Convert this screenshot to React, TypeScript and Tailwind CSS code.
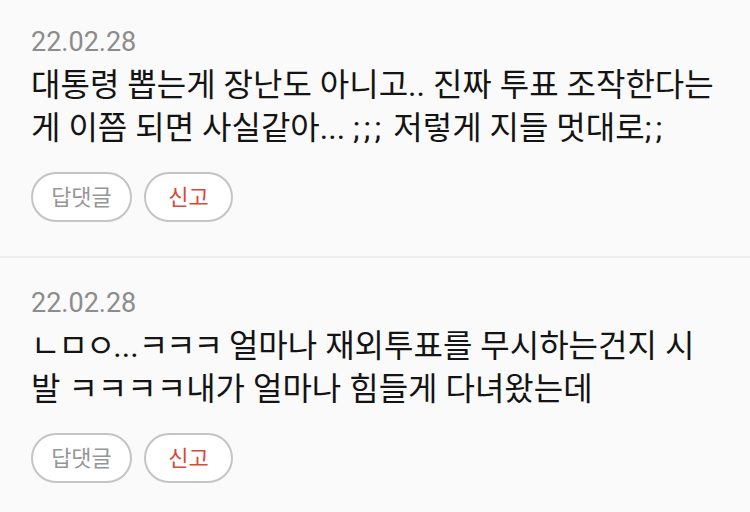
import React from "react";

// A run of text with optional extra letter spacing
type Run = { t: string; cls?: string };

type Comment = {
  date: string;
  lines: Run[][];
};

const tight = "tracking-[-2px]";
const loose = "tracking-[4px]";

const comments: Comment[] = [
  {
    date: "22.02.28",
    lines: [
      [{ t: "대통령 뽑는게 장난도 아니고.. 진짜 투표 조작한다는" }],
      [
        { t: "게 이쯤 되면 사실같아... " },
        { t: ";;;", cls: loose },
        { t: " 저렇게 지들 멋대로" },
        { t: ";;", cls: loose },
      ],
    ],
  },
  {
    date: "22.02.28",
    lines: [
      [
        { t: "ㄴㅁㅇ", cls: tight },
        { t: "..." },
        { t: "ㅋㅋㅋ", cls: tight },
        { t: " 얼마나 재외투표를 무시하는건지 시" },
      ],
      [{ t: "발 ㅋㅋㅋㅋ내가 얼마나 힘들게 다녀왔는데" }],
    ],
  },
];

// Latin glyphs from Roboto, Hangul falls through to Noto Sans CJK KR
const bodyFont = {
  fontFamily: 'Roboto, "Noto Sans CJK KR", sans-serif',
};

function CommentItem({ c }: { c: Comment }) {
  return (
    <div className="border-b-2 border-[#eeeeee] pl-[31px] pr-[10px] pt-[29px] pb-[34px]">
      <div className="text-[27px] leading-[32px] text-[#8c8c8c]" style={bodyFont}>
        {c.date}
      </div>
      <p className="mt-[6px] text-[32px] leading-[43px] text-[#141414]" style={bodyFont}>
        {c.lines.map((line, i) => (
          <React.Fragment key={i}>
            {line.map((r, j) =>
              r.cls ? (
                <span key={j} className={r.cls}>
                  {r.t}
                </span>
              ) : (
                <React.Fragment key={j}>{r.t}</React.Fragment>
              )
            )}
            {i < c.lines.length - 1 && <br />}
          </React.Fragment>
        ))}
      </p>
      <div className="mt-[22px] flex gap-[12px]" style={bodyFont}>
        <button className="flex h-[50px] w-[101px] items-center justify-center rounded-full border-2 border-[#c4c4c4] bg-white text-[22px] text-[#969696]">
          답댓글
        </button>
        <button className="flex h-[50px] w-[89px] items-center justify-center rounded-full border-2 border-[#c4c4c4] bg-white text-[22px] text-[#d9483b]">
          신고
        </button>
      </div>
    </div>
  );
}

export default function App() {
  return (
    <div className="h-[512px] w-[750px] overflow-hidden bg-[#fafafa]">
      <div className="-mt-[3px]">
        {comments.map((c, i) => (
          <CommentItem key={i} c={c} />
        ))}
      </div>
    </div>
  );
}
